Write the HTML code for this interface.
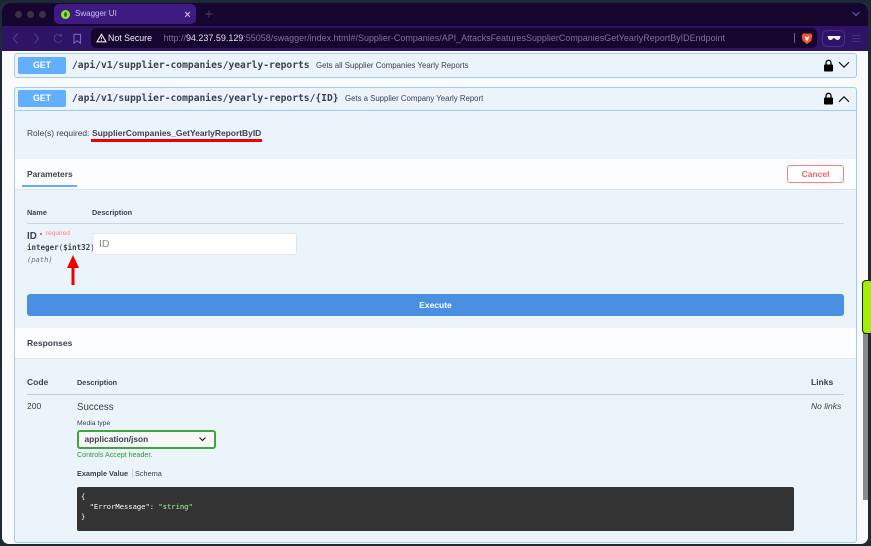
<!DOCTYPE html>
<html><head><meta charset="utf-8">
<style>
html,body{margin:0;padding:0;width:871px;height:546px;overflow:hidden;background:#1c2a36;font-family:"Liberation Sans",sans-serif;}
.a{position:absolute;white-space:nowrap;line-height:1;}
.m{font-family:"DejaVu Sans Mono","Liberation Mono",monospace;}
#win{position:absolute;left:2px;top:3px;width:866px;height:541px;border-radius:7px;overflow:hidden;background:#fafafa;}
#root{position:absolute;left:0;top:0;width:871px;height:546px;filter:blur(.3px);}
</style></head><body>
<div id="root">
<div id="win"></div>
<div class="a" style="left:2px;top:3px;width:866px;height:23px;background:#16052f;border-radius:7px 7px 0 0"></div>
<div class="a" style="left:2px;top:26px;width:866px;height:25px;background:#2f1364"></div>
<div class="a" style="left:15px;top:11px;width:7px;height:7px;border-radius:50%;background:#3a3346"></div>
<div class="a" style="left:27px;top:11px;width:7px;height:7px;border-radius:50%;background:#3a3346"></div>
<div class="a" style="left:39px;top:11px;width:7px;height:7px;border-radius:50%;background:#3a3346"></div>
<div class="a" style="left:54px;top:4px;width:142px;height:20px;background:#3e1a82;border-radius:5px"></div>
<div class="a" style="left:61px;top:10px;width:9px;height:9px;border-radius:50%;background:#85ea2d"></div>
<div class="a" style="left:64px;top:12px;width:3px;height:5px;border-radius:50%;background:#3b6a1a"></div>
<div class="a" style="left:75px;top:10px;font-size:8px;color:#c9bfe4">Swagger UI</div>
<svg class="a" style="left:183px;top:10px" width="10" height="9"><path d="M2.2 2L6.8 6.8M6.8 2L2.2 6.8" stroke="#d8d0ec" stroke-width="1"/></svg>
<svg class="a" style="left:204px;top:9px" width="10" height="10"><path d="M5 1.5V8.5M1.5 5H8.5" stroke="#4b3a72" stroke-width="1"/></svg>
<svg class="a" style="left:851px;top:10px" width="10" height="8"><path d="M1.5 2L5 5.5L8.5 2" stroke="#7257b8" stroke-width="1.1" fill="none"/></svg>
<svg class="a" style="left:8px;top:28px" width="80" height="22" fill="none" stroke="#4f3b92" stroke-width="1.1">
<path d="M9.5 5.5L5.5 10.5L9.5 15.5"/><path d="M26.5 5.5L30.5 10.5L26.5 15.5"/>
<path d="M53 7.5A4 4 0 1 0 53.6 12.5"/><path d="M53.5 5.5V8H51"/>
<path stroke="#7a5fd0" d="M66 6.3H72.5V15.2L69.2 12.8L66 15.2Z"/>
</svg>
<div class="a" style="left:91px;top:28px;width:726px;height:20px;background:#16052f;border-radius:5px"></div>
<svg class="a" style="left:96px;top:33px" width="11" height="10"><path d="M5.5 1.3L10 8.8H1Z" stroke="#eee" stroke-width="1.1" fill="none"/><path d="M5.5 4V6.2M5.5 7V7.8" stroke="#eee" stroke-width="0.9"/></svg>
<div class="a" style="left:108px;top:33.5px;font-size:8.8px;color:#f1eff6">Not Secure</div>
<div class="a" style="left:163.5px;top:33.5px;font-size:8.98px;color:#7f7691">http://<span style="color:#e3e0ea">94.237.59.129</span>:55058/swagger/index.html#/Supplier-Companies/API_AttacksFeaturesSupplierCompaniesGetYearlyReportByIDEndpoint</div>
<div class="a" style="left:794px;top:33px;width:1px;height:10px;background:#6a6478"></div>
<svg class="a" style="left:801px;top:32px" width="12" height="13"><path d="M2 1.5H10L11.3 3.5L10.5 8.5L6 12.3L1.5 8.5L.7 3.5Z" fill="#f0562a"/><path d="M3.5 4L6 5.5L8.5 4L7 8L6 9.5L5 8Z" fill="#fff"/></svg>
<div class="a" style="left:822px;top:30px;width:23px;height:17px;box-sizing:border-box;border:1px solid #4a2f8c;border-radius:5px"></div>
<svg class="a" style="left:827px;top:35px" width="14" height="7"><path d="M.5 1H13.5L13 3C12.5 5.6 8.7 5.6 8 3.2H6C5.3 5.6 1.5 5.6 1 3Z" fill="#f4f2f8"/></svg>
<svg class="a" style="left:852px;top:34px" width="10" height="10"><path d="M0 1.5H8.5M0 4.5H8.5M0 7.5H8.5" stroke="#452d88" stroke-width="1"/></svg>

<!-- Swagger content -->
<div class="a" style="left:14px;top:53px;width:843px;height:25px;box-sizing:border-box;background:#ebf3fb;border:1px solid #9fcdf8;border-radius:3px"></div>
<div class="a" style="left:18px;top:57px;width:48px;height:17px;background:#61affe;border-radius:2px;color:#fff;font-weight:bold;font-size:8.8px;line-height:17px;text-align:center">GET</div>
<div class="a m" style="left:72px;top:60.5px;font-size:9.65px;font-weight:bold;color:#3b4151">/api/v1/supplier-companies/yearly-reports</div>
<div class="a" style="left:316px;top:61.5px;font-size:7.85px;color:#3b4151">Gets all Supplier Companies Yearly Reports</div>
<svg class="a" style="left:823px;top:59px" width="11" height="13"><path d="M3 6V3.8A2.5 2.5 0 0 1 8 3.8V6" stroke="#000" stroke-width="1.3" fill="none"/><rect x="1" y="5.5" width="9" height="7" rx="1" fill="#000"/></svg>
<svg class="a" style="left:838px;top:61px" width="12" height="8"><path d="M1 1.2L6 6.2L11 1.2" stroke="#111" stroke-width="1.1" fill="none"/></svg>

<div class="a" style="left:14px;top:87px;width:843px;height:456px;box-sizing:border-box;background:#ebf3fb;border:1px solid #9fcdf8;border-radius:3px"></div>
<div class="a" style="left:15px;top:110px;width:841px;height:1px;background:#9fcdf8"></div>
<div class="a" style="left:18px;top:90px;width:48px;height:17px;background:#61affe;border-radius:2px;color:#fff;font-weight:bold;font-size:8.8px;line-height:17px;text-align:center">GET</div>
<div class="a m" style="left:72px;top:93.5px;font-size:9.65px;font-weight:bold;color:#3b4151">/api/v1/supplier-companies/yearly-reports/{ID}</div>
<div class="a" style="left:345px;top:94.5px;font-size:7.8px;color:#3b4151">Gets a Supplier Company Yearly Report</div>
<svg class="a" style="left:823px;top:92px" width="11" height="13"><path d="M3 6V3.8A2.5 2.5 0 0 1 8 3.8V6" stroke="#000" stroke-width="1.3" fill="none"/><rect x="1" y="5.5" width="9" height="7" rx="1" fill="#000"/></svg>
<svg class="a" style="left:838px;top:95px" width="12" height="8"><path d="M1 6.8L6 1.8L11 6.8" stroke="#111" stroke-width="1.1" fill="none"/></svg>

<div class="a" style="left:27px;top:129px;font-size:8.4px;color:#3b4151">Role(s) required:</div>
<div class="a" style="left:92px;top:129px;font-size:8.45px;font-weight:bold;color:#3b4151">SupplierCompanies_GetYearlyReportByID</div>
<div class="a" style="left:91px;top:139px;width:171px;height:2.5px;background:#f00000"></div>

<div class="a" style="left:15px;top:159px;width:841px;height:30px;background:#fcfdfe;border-bottom:1px solid #dfe5ec"></div>
<div class="a" style="left:27px;top:170px;font-size:8.4px;font-weight:bold;color:#3b4151">Parameters</div>
<div class="a" style="left:22px;top:185px;width:55px;height:2px;background:#61affe"></div>
<div class="a" style="left:787px;top:165px;width:57px;height:18px;box-sizing:border-box;border:1px solid #ff7f7f;border-radius:3px;color:#ff6060;font-weight:bold;font-size:8.5px;line-height:16px;text-align:center;background:#fff">Cancel</div>

<div class="a" style="left:27px;top:208.5px;font-size:7.3px;font-weight:bold;color:#3b4151">Name</div>
<div class="a" style="left:92px;top:208.5px;font-size:7.3px;font-weight:bold;color:#3b4151">Description</div>
<div class="a" style="left:27px;top:223px;width:817px;height:1px;background:#cdd3dc"></div>
<div class="a" style="left:27px;top:231.5px;font-size:9.8px;font-weight:bold;color:#3b4151">ID</div>
<div class="a" style="left:39.5px;top:232.5px;width:2.5px;height:2.5px;border-radius:50%;background:#f93e3e"></div>
<div class="a" style="left:46px;top:230.5px;font-size:6.5px;color:#ff7f7f">required</div>
<div class="a" style="left:92px;top:233px;width:205px;height:22px;box-sizing:border-box;background:#fff;border:1px solid #e2e6ea;border-radius:3px;font-size:10.5px;color:#8a8a8a;line-height:20px;padding-left:6px">ID</div>
<div class="a m" style="left:27px;top:244px;font-size:7.5px;font-weight:bold;color:#3b4151">integer<span style="font-weight:normal">(</span>$int32<span style="font-weight:normal">)</span></div>
<div class="a m" style="left:27px;top:256px;font-size:7.1px;font-style:italic;color:#6b6f7a">(path)</div>
<svg class="a" style="left:66px;top:254px" width="14" height="32"><path d="M7 1L13 14H8.5V31H5.5V14H1Z" fill="#f00000"/></svg>

<div class="a" style="left:27px;top:294px;width:817px;height:22px;background:#4990e2;border-radius:3px;color:#fff;font-weight:bold;font-size:8.5px;line-height:22px;text-align:center">Execute</div>

<div class="a" style="left:15px;top:328px;width:841px;height:30px;background:#fcfdfe;border-bottom:1px solid #dfe5ec"></div>
<div class="a" style="left:27px;top:339px;font-size:8.5px;font-weight:bold;color:#3b4151">Responses</div>

<div class="a" style="left:27px;top:378px;font-size:8.5px;font-weight:bold;color:#3b4151">Code</div>
<div class="a" style="left:77px;top:378.5px;font-size:7.3px;font-weight:bold;color:#3b4151">Description</div>
<div class="a" style="left:811px;top:378px;font-size:8.5px;font-weight:bold;color:#3b4151">Links</div>
<div class="a" style="left:27px;top:394px;width:817px;height:1px;background:#c3cbd8"></div>
<div class="a" style="left:27px;top:402px;font-size:8.5px;color:#3b4151">200</div>
<div class="a" style="left:77px;top:402.5px;font-size:9.7px;color:#3b4151">Success</div>
<div class="a" style="left:811px;top:402px;font-size:8.5px;font-style:italic;color:#3b4151">No links</div>
<div class="a" style="left:77px;top:421px;font-size:6.8px;color:#3b4151">Media type</div>
<div class="a" style="left:77px;top:430px;width:139px;height:19px;box-sizing:border-box;border:2px solid #41a341;border-radius:3px;background:#f7f7f7;font-size:8.4px;font-weight:bold;color:#3b4151;line-height:15px;padding-left:5.5px">application/json</div>
<svg class="a" style="left:198px;top:436px" width="9" height="7"><path d="M1.5 1.5L4.5 4.5L7.5 1.5" stroke="#222" stroke-width="1.2" fill="none"/></svg>
<div class="a" style="left:77px;top:451.5px;font-size:7.1px;color:#2f9a2f">Controls Accept header.</div>
<div class="a" style="left:77px;top:469.5px;font-size:7.3px;font-weight:bold;color:#3b4151">Example Value</div>
<div class="a" style="left:131.5px;top:469px;width:1px;height:9px;background:#cdd3dc"></div>
<div class="a" style="left:135px;top:469.5px;font-size:7.3px;color:#3b4151">Schema</div>
<div class="a" style="left:77px;top:487px;width:717px;height:44px;background:#333;border-radius:2px"></div>
<div class="a m" style="left:81px;top:492px;font-size:7.15px;line-height:10px;color:#fff;white-space:pre">{
  "ErrorMessage": <span style="color:#a2fca2">"string"</span>
}</div>

<!-- scrollbar -->
<div class="a" style="left:863px;top:330px;width:4.5px;height:170px;background:#8a8a8a"></div>
<div class="a" style="left:861.5px;top:280px;width:12px;height:54px;box-sizing:border-box;background:#a0f000;border:1.5px solid #16222e;border-radius:4px"></div>
</div>
</body></html>
